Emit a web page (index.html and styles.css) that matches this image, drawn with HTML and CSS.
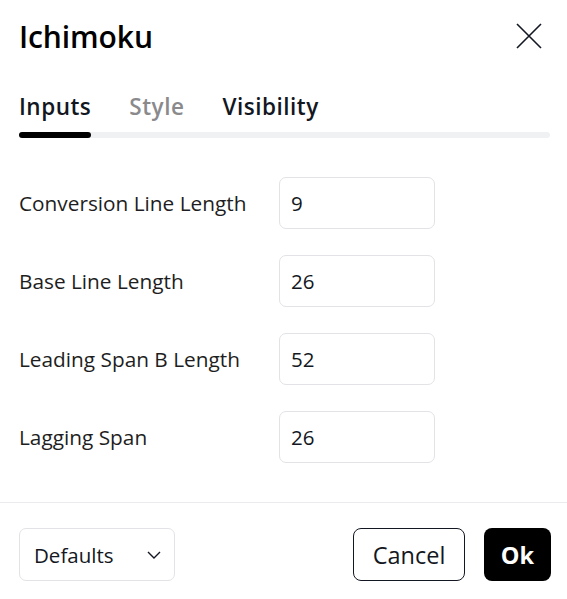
FILE: index.html
```html
<!DOCTYPE html>
<html lang="en">
<head>
<meta charset="utf-8">
<title>Ichimoku</title>
<link rel="stylesheet" href="styles.css">
</head>
<body>
<div class="dialog">
  <header class="head">
    <h1 class="title">Ichimoku</h1>
    <button class="close" aria-label="Close">
      <svg width="26" height="26" viewBox="0 0 26 26"><path d="M1 1 L25 25 M25 1 L1 25" stroke="#131722" stroke-width="1.6" fill="none"/></svg>
    </button>
  </header>
  <nav class="tabs">
    <div class="tab-list">
      <span class="tab active">Inputs</span>
      <span class="tab muted">Style</span>
      <span class="tab">Visibility</span>
    </div>
    <div class="track"><div class="indicator"></div></div>
  </nav>
  <div class="form">
    <div class="row"><span class="label">Conversion Line Length</span><div class="input">9</div></div>
    <div class="row"><span class="label">Base Line Length</span><div class="input">26</div></div>
    <div class="row"><span class="label">Leading Span B Length</span><div class="input">52</div></div>
    <div class="row"><span class="label">Lagging Span</span><div class="input">26</div></div>
  </div>
  <div class="sep"></div>
  <footer class="foot">
    <div class="select">
      <span>Defaults</span>
      <svg width="16" height="10" viewBox="0 0 16 10"><path d="M2 2 L8 8 L14 2" stroke="#131722" stroke-width="1.4" fill="none"/></svg>
    </div>
    <div class="actions">
      <button class="btn cancel">Cancel</button>
      <button class="btn ok">Ok</button>
    </div>
  </footer>
</div>
</body>
</html>
```
FILE: styles.css
```css
* { box-sizing: border-box; }
html, body { margin: 0; padding: 0; background: #fff; }
body {
  font-family: "Open Sans", "Noto Sans", sans-serif;
  color: #131722;
  width: 567px;
  height: 599px;
  overflow: hidden;
}
.dialog { display: flex; flex-direction: column; }
.head {
  height: 72px;
  display: flex;
  align-items: center;
  justify-content: space-between;
  padding: 0 25px 0 19px;
}
.title {
  margin: 0;
  font-size: 30px;
  font-weight: 600;
  color: #000;
  letter-spacing: -0.1px;
}
.close {
  border: 0;
  background: none;
  padding: 0;
  width: 26px;
  height: 26px;
  display: flex;
}
.tabs { padding: 0 17px 0 19px; }
.tab-list {
  display: flex;
  gap: 38px;
  padding-top: 20px;
  height: 60px;
}
.tab {
  font-size: 22.5px;
  font-weight: 600;
  line-height: 30px;
  letter-spacing: 0.5px;
  color: #131722;
}
.tab.muted { color: #8a8a8d; }
.track {
  height: 6px;
  background: #f0f1f3;
  border-radius: 3px;
}
.indicator {
  width: 72px;
  height: 6px;
  background: #000;
  border-radius: 3px;
}
.form {
  display: flex;
  flex-direction: column;
  gap: 26px;
  padding: 39px 0 39px 19px;
}
.row {
  display: grid;
  grid-template-columns: 260px 156px;
  align-items: center;
  height: 52px;
}
.label { font-size: 20.8px; color: #1e1e22; }
.input {
  height: 52px;
  border: 1px solid #e2e3e6;
  border-radius: 7px;
  padding-left: 11px;
  display: flex;
  align-items: center;
  font-size: 20.5px;
  font-weight: 500;
  color: #131722;
}
.sep { height: 1px; background: #e9ebee; }
.foot {
  display: flex;
  justify-content: space-between;
  padding: 25px 16px 0 19px;
}
.select {
  width: 156px;
  height: 53px;
  border: 1px solid #e2e3e6;
  border-radius: 7px;
  display: flex;
  align-items: center;
  justify-content: space-between;
  padding: 0 12px 0 14px;
  font-size: 20.5px;
}
.actions { display: flex; gap: 19px; }
.btn {
  height: 53px;
  border-radius: 8px;
  font-family: inherit;
  font-size: 23.5px;
  padding: 0;
}
.cancel {
  width: 112px;
  border: 1px solid #131722;
  background: #fff;
  color: #131722;
}
.ok {
  width: 67px;
  border: 0;
  background: #000;
  color: #fff;
  font-weight: 700;
}
```
